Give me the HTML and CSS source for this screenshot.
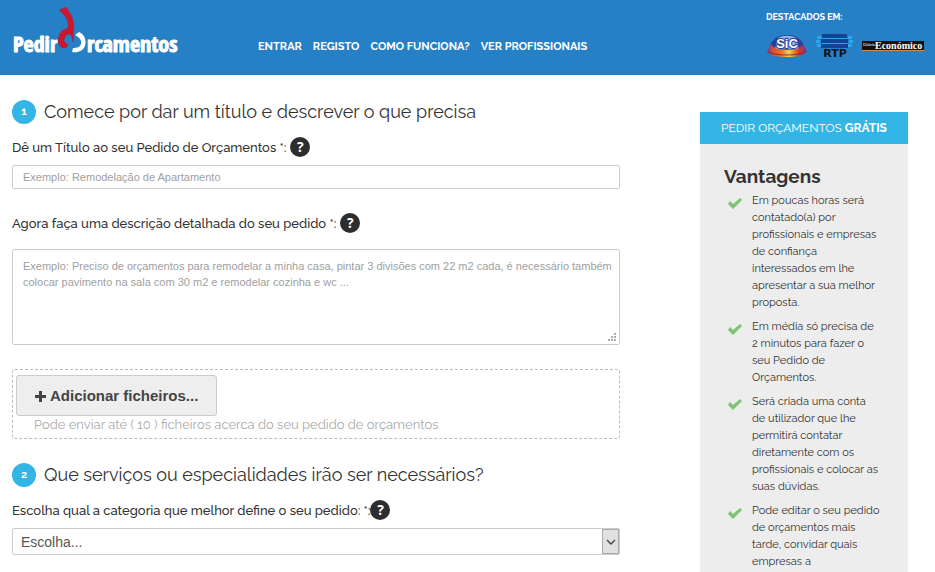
FILE: index.html
```html
<!DOCTYPE html>
<html lang="pt">
<head>
    <title>Pedir Orçamentos</title>
    <meta charset="utf-8" />
    <meta name="viewport" content="width=device-width, initial-scale=1" />
    <link rel="stylesheet" href="styles.css">
</head>
<body>
    <header class="topbar">
        <a class="logo" href="#" aria-label="Pedir Orcamentos">
            <svg width="170" height="52" viewBox="0 0 170 52">
                <text class="logo-text" x="1" y="46" font-size="22">Pedir</text>
                <path fill="#d0142c" stroke="#6b3d70" stroke-width="0.6" d="M47 4 L54 1 C58 6 61 12 62 19 C61 24 62 30 61 36 C60 31 59 28 57 28 C54 28 52 32 52 35 L56 39 L54 42 L50 42 C45 38 45 32 49 26 C51 23 54 24 56 21 C57 14 53 9 47 4 Z" />
                <path fill="#fff" d="M63 29 L67 26 C72 28 75 34 73 40 C71 45 66 47 60 46 L61 42 C65 42 68 41 69 38 C70 34 67 31 63 29 Z" />
                <text class="logo-text" x="75" y="46" font-size="22">rcamentos</text>
            </svg>
        </a>
        <nav class="menu">
            <a href="#">ENTRAR</a>
            <a href="#">REGISTO</a>
            <a href="#">COMO FUNCIONA?</a>
            <a href="#">VER PROFISSIONAIS</a>
        </nav>
        <div class="featured">
            <strong>DESTACADOS EM:</strong>
            <div class="brands">
                <svg width="42" height="24" viewBox="0 0 42 24" role="img" aria-label="SIC">
                    <defs>
                        <linearGradient id="fire">
                            <stop offset="0" stop-color="#5a3fa0" />
                            <stop offset="0.15" stop-color="#d8502c" />
                            <stop offset="0.35" stop-color="#f07020" />
                            <stop offset="0.55" stop-color="#ffd24c" />
                            <stop offset="0.8" stop-color="#d8381c" />
                            <stop offset="1" stop-color="#5a3fa0" />
                        </linearGradient>
                    </defs>
                    <path fill="#2c3f9e" d="M3 15 C5 5 12 1 21 1 C30 1 37 5 39 15 Z" />
                    <path fill="#8fb4e8" d="M12 4 C17 1 25 1 30 4 L33 15 H9 Z" />
                    <path fill="url(#fire)" d="M5 10 L1 17 C3 22 12 23 21 23 C31 23 39 21 41 17 L37 10 C35 14 29 16 21 16 C13 16 7 14 5 10 Z" />
                    <path fill="none" stroke="#9c2430" d="M2 18 C10 22 31 22 40 18" />
                    <text class="sic-text" x="21" y="14" font-size="13" text-anchor="middle">SiC</text>
                </svg>
                <svg width="40" height="26" viewBox="0 0 40 26" role="img" aria-label="RTP">
                    <g fill="#0c4496">
                        <rect x="7" y="1" width="25" height="4" />
                        <rect x="6" y="6" width="27" height="4" />
                        <rect x="6" y="11" width="27" height="4" />
                    </g>
                    <g fill="#26a7f0">
                        <rect x="2" y="3" width="4" height="3" />
                        <rect x="1" y="7" width="4" height="3" />
                        <rect x="2" y="11" width="4" height="3" />
                        <rect x="33" y="3" width="4" height="3" />
                        <rect x="34" y="7" width="4" height="3" />
                        <rect x="33" y="11" width="4" height="3" />
                        <rect x="7" y="5" width="25" height="1" />
                        <rect x="7" y="10" width="25" height="1" />
                    </g>
                    <text class="rtp-text" x="20" y="24" font-size="11" text-anchor="middle">RTP</text>
                </svg>
                <svg class="economico" width="62" height="12" viewBox="0 0 62 12" role="img" aria-label="Diário Económico">
                    <rect y="1" width="62" height="10" fill="#14100e" />
                    <rect y="10" width="62" height="1" fill="#c98a50" />
                    <text x="1" y="6" font-size="5" fill="#fff">Diário</text>
                    <text x="13" y="9" font-size="10" font-weight="bold" fill="#fff">Económico</text>
                </svg>
            </div>
        </div>
    </header>

    <main class="page">
        <form class="order">
            <h2><span class="step">1</span>Comece por dar um título e descrever o que precisa</h2>
            <div class="label-row">
                <label for="title">Dê um Título ao seu Pedido de Orçamentos *:</label>
                <button type="button" class="help" aria-label="Ajuda">?</button>
            </div>
            <input type="text" id="title" class="field" placeholder="Exemplo: Remodelação de Apartamento" />

            <div class="label-row label-row-tall">
                <label for="description">Agora faça uma descrição detalhada do seu pedido *:</label>
                <button type="button" class="help" aria-label="Ajuda">?</button>
            </div>
            <div class="area">
                <textarea id="description" class="field" placeholder="Exemplo: Preciso de orçamentos para remodelar a minha casa, pintar 3 divisões com 22 m2 cada, é necessário também colocar pavimento na sala com 30 m2 e remodelar cozinha e wc ..."></textarea>
                <svg class="grip" width="8" height="8" viewBox="0 0 8 8" fill="#aaa">
                    <path d="M6 0h2v2h-2z M3 3h2v2h-2z M6 3h2v2h-2z M0 6h2v2h-2z M3 6h2v2h-2z M6 6h2v2h-2z" />
                </svg>
            </div>

            <div class="upload">
                <button type="button" class="add-files">
                    <svg width="12" height="12" viewBox="0 0 12 12"><path fill="#444" d="M4 1h3v4h4v3H7v4H4V8H0V5h4z" /></svg>
                    Adicionar ficheiros...
                </button>
                <p>Pode enviar até ( 10 ) ficheiros acerca do seu pedido de orçamentos</p>
            </div>

            <h2><span class="step">2</span>Que serviços ou especialidades irão ser necessários?</h2>
            <div class="label-row label-row-tight">
                <label for="category">Escolha qual a categoria que melhor define o seu pedido: *:</label>
                <button type="button" class="help" aria-label="Ajuda">?</button>
            </div>
            <div class="select">
                <select id="category">
                    <option>Escolha...</option>
                </select>
                <span class="arrow">
                    <svg width="10" height="6" viewBox="0 0 10 6"><path fill="none" stroke="#444" stroke-width="1.4" d="M1 1l4 4 4-4" /></svg>
                </span>
            </div>
        </form>

        <aside class="benefits">
            <div class="benefits-title">PEDIR ORÇAMENTOS <b>GRÁTIS</b></div>
            <h3>Vantagens</h3>
            <ul>
                <li>
                    <svg class="check" viewBox="0 0 14 12"><path d="M0 7l2-3 3 3 7-6 2 2-9 9z" /></svg>
                    <span>Em poucas horas será<br>contatado(a) por<br>profissionais e empresas<br>de confiança<br>interessados em lhe<br>apresentar a sua melhor<br>proposta.</span>
                </li>
                <li>
                    <svg class="check" viewBox="0 0 14 12"><path d="M0 7l2-3 3 3 7-6 2 2-9 9z" /></svg>
                    <span>Em média só precisa de<br>2 minutos para fazer o<br>seu Pedido de<br>Orçamentos.</span>
                </li>
                <li>
                    <svg class="check" viewBox="0 0 14 12"><path d="M0 7l2-3 3 3 7-6 2 2-9 9z" /></svg>
                    <span>Será criada uma conta<br>de utilizador que lhe<br>permitirá contatar<br>diretamente com os<br>profissionais e colocar as<br>suas dúvidas.</span>
                </li>
                <li>
                    <svg class="check" viewBox="0 0 14 12"><path d="M0 7l2-3 3 3 7-6 2 2-9 9z" /></svg>
                    <span>Pode editar o seu pedido<br>de orçamentos mais<br>tarde, convidar quais<br>empresas a</span>
                </li>
            </ul>
        </aside>
    </main>
</body>
</html>
```
FILE: styles.css
```css
* {
    box-sizing: border-box;
}
body {
    display: flex;
    flex-direction: column;
    min-height: 100vh;
    margin: 0;
    background: #fff;
    color: #333;
    font-family: Raleway, Lato, sans-serif;
    font-size: 13px;
}
h2, h3, p, ul {
    margin: 0;
    padding: 0;
    font-weight: normal;
}
button {
    cursor: pointer;
}
svg {
    display: block;
    flex: none;
}

/* top bar */
.topbar {
    display: flex;
    align-items: flex-start;
    height: 75px;
    padding: 0 11px 0 12px;
    background: #2680c6;
    color: #fff;
}
.logo {
    padding-top: 6px;
}
.logo-text {
    fill: #fff;
    stroke: #fff;
    stroke-width: 1px;
    font-family: Impact, "Liberation Sans Narrow", "Open Sans Condensed", sans-serif;
    font-weight: bold;
}
.menu {
    display: flex;
    gap: 11px;
    margin-left: 76px;
    padding-top: 39px;
    font-size: 11px;
    line-height: 16px;
    font-weight: bold;
    white-space: nowrap;
}
.menu a {
    color: #fff;
    text-decoration: none;
}
.featured {
    margin-left: auto;
    padding-top: 11px;
    font-size: 9px;
    line-height: 12px;
}
.featured strong {
    display: block;
}
.brands {
    display: flex;
    align-items: center;
    gap: 7px;
    margin-top: 10px;
}
.sic-text {
    fill: #fff;
    stroke: #2c3f9e;
    stroke-width: 2px;
    paint-order: stroke;
    font-family: "Liberation Sans", sans-serif;
    font-weight: bold;
}
.rtp-text {
    fill: #10131c;
    font-family: "DejaVu Sans", sans-serif;
    font-weight: bold;
}
.economico {
    font-family: "Liberation Serif", serif;
}

/* form */
.page {
    display: flex;
    flex: 1;
    gap: 80px;
    padding: 0 27px 0 12px;
}
.order {
    flex: 1;
    min-width: 0;
    padding-top: 25px;
}
.order h2 {
    display: flex;
    align-items: center;
    gap: 8px;
    margin-bottom: 13px;
    font-size: 18px;
    line-height: 24px;
}
.step {
    width: 24px;
    height: 24px;
    border-radius: 50%;
    background: #33b5e5;
    color: #fff;
    font-size: 11px;
    font-weight: bold;
    text-align: center;
}
.label-row {
    display: flex;
    align-items: center;
    gap: 4px;
    height: 20px;
    margin-bottom: 8px;
    font-weight: 500;
}
.label-row-tall {
    margin: 24px 0 16px;
}
.label-row-tight {
    gap: 0;
}
.help {
    width: 20px;
    height: 20px;
    padding: 0;
    border: none;
    border-radius: 50%;
    background: #2d2d2d;
    color: #fff;
    font: bold 14px/20px "Open Sans", sans-serif;
}
.field {
    display: block;
    width: 100%;
    height: 24px;
    padding: 0 10px;
    border: 1px solid #ccc;
    border-radius: 2px;
    background: #fff;
    color: #555;
    font: 11px/16px "Liberation Sans", Arial, sans-serif;
}
.field::placeholder {
    color: #a0a0a0;
}
.area {
    position: relative;
}
textarea.field {
    height: 96px;
    padding: 8px 4px 8px 10px;
    resize: none;
}
.grip {
    position: absolute;
    right: 4px;
    bottom: 4px;
}
.upload {
    margin: 24px 0;
    padding: 5px 3px;
    border: 1px dashed #bbb;
    border-radius: 3px;
}
.upload p {
    padding-left: 18px;
    color: #aaa;
    line-height: 17px;
}
.add-files {
    display: flex;
    align-items: center;
    gap: 3px;
    height: 41px;
    padding: 0 18px;
    border: 1px solid #ccc;
    border-radius: 3px;
    background: #eee;
    color: #444;
    font: bold 15px/20px "Liberation Sans", Arial, sans-serif;
}
.select {
    position: relative;
}
.select select {
    display: block;
    width: 100%;
    height: 27px;
    padding: 0 26px 0 8px;
    border: 1px solid #ccc;
    border-radius: 2px;
    background: #fff;
    color: #555;
    font: 14px/20px "Liberation Sans", Arial, sans-serif;
    appearance: none;
}
.arrow {
    display: flex;
    align-items: center;
    justify-content: center;
    position: absolute;
    top: 1px;
    right: 1px;
    bottom: 1px;
    width: 17px;
    border: 1px solid #aaa;
    background: #e1e1e1;
    pointer-events: none;
}

/* side panel */
.benefits {
    flex: none;
    width: 208px;
    margin-top: 37px;
    background: #ededed;
}
.benefits-title {
    background: #33b5e5;
    color: #fff;
    font-size: 12px;
    line-height: 32px;
    text-align: center;
}
.benefits h3 {
    margin: 20px 24px 4px;
    font-size: 19px;
    line-height: 24px;
    font-weight: bold;
}
.benefits ul {
    padding-left: 28px;
    list-style: none;
    font-size: 11px;
    line-height: 17px;
    white-space: nowrap;
}
.benefits li {
    display: flex;
    gap: 10px;
    margin-bottom: 7px;
}
.benefits li:last-child {
    margin-bottom: 0;
}
.check {
    width: 14px;
    height: 12px;
    margin-top: 5px;
    fill: #7fc475;
}
```
